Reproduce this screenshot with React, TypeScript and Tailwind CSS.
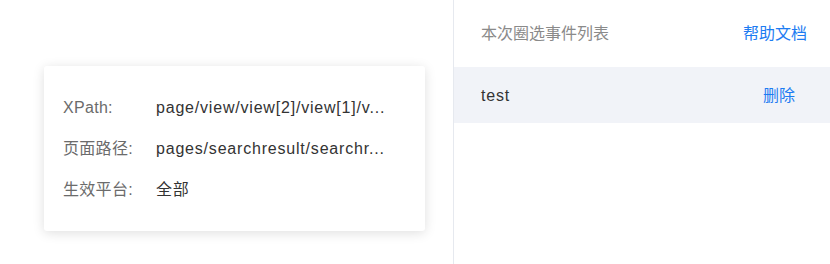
const rows = [
  { label: "XPath:", value: "page/view/view[2]/view[1]/v..." },
  { label: "页面路径:", value: "pages/searchresult/searchr..." },
  { label: "生效平台:", value: "全部" },
];

const App = () => {
  return (
    <div
      className="flex h-[264px] w-[830px] overflow-hidden bg-white"
      style={{ fontFamily: '"Liberation Sans", "Noto Sans CJK SC", sans-serif' }}
    >
      <div className="w-[453px] shrink-0 pl-[44px] pt-[66px]">
        <div className="flex h-[165px] w-[381px] flex-col justify-center gap-[18px] rounded-[3px] bg-white pl-[19px] shadow-[0_2px_12px_rgba(0,0,0,0.13)]">
          {rows.map((row) => (
            <div key={row.label} className="flex items-center text-[16px] leading-[23px]">
              <span className="w-[93px] shrink-0 tracking-[0.3px] text-[#6b6b6b]">{row.label}</span>
              <span className="whitespace-nowrap tracking-[0.8px] text-[#333333]">{row.value}</span>
            </div>
          ))}
        </div>
      </div>
      <div className="flex flex-1 flex-col border-l-[1px] border-[#e6e9ef]">
        <div className="flex h-[67px] items-center justify-between pl-[27px] pr-[23px] text-[16px]">
          <span className="text-[#8a8a8a]">本次圈选事件列表</span>
          <span className="text-[#1d7cf2]">帮助文档</span>
        </div>
        <div className="flex h-[56px] items-center justify-between bg-[#f1f3f8] pl-[27px] pr-[35px] pt-[2px] text-[16px]">
          <span className="tracking-[0.8px] text-[#333333]">test</span>
          <span className="text-[#1d7cf2]">删除</span>
        </div>
      </div>
    </div>
  );
};

export default App;
